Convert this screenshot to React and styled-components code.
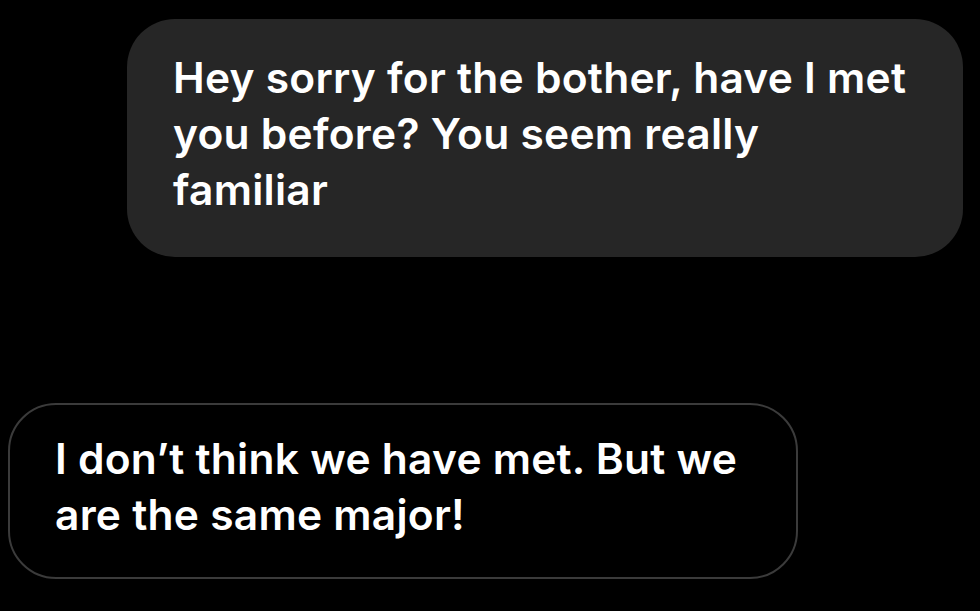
import React from 'react';
import styled, { createGlobalStyle } from 'styled-components';

const GlobalStyle = createGlobalStyle`
  html, body {
    margin: 0;
    padding: 0;
    background: #000;
  }
`;

function App() {
  return (
    <>
      <GlobalStyle />
      <Thread>
        <Bubble $mine>
          Hey sorry for the bother, have I met<br />
          you before? You seem really<br />
          familiar
        </Bubble>
        <Bubble>
          I don’t think we have met. But we<br />
          are the same major!
        </Bubble>
      </Thread>
    </>
  );
}

const Thread = styled.div`
  width: 980px;
  height: 611px;
  box-sizing: border-box;
  background: #000;
  display: flex;
  flex-direction: column;
  padding: 19px 17px 0 8px;
  gap: 146px;
  overflow: hidden;
`;

const Bubble = styled.div`
  box-sizing: border-box;
  align-self: ${p => (p.$mine ? 'flex-end' : 'flex-start')};
  width: ${p => (p.$mine ? '836px' : '790px')};
  border-radius: 48px;
  background: ${p => (p.$mine ? '#262626' : '#000')};
  border: ${p => (p.$mine ? 'none' : '2px solid #3b3b3b')};
  padding: ${p => (p.$mine ? '31px 20px 39px 46px' : '26px 20px 34px 45px')};
  color: #fff;
  font-family: Inter, "Liberation Sans", sans-serif;
  font-weight: 600;
  font-size: 42.5px;
  line-height: 56px;
  letter-spacing: 0.25px;
  white-space: nowrap;
`;

export default App;
